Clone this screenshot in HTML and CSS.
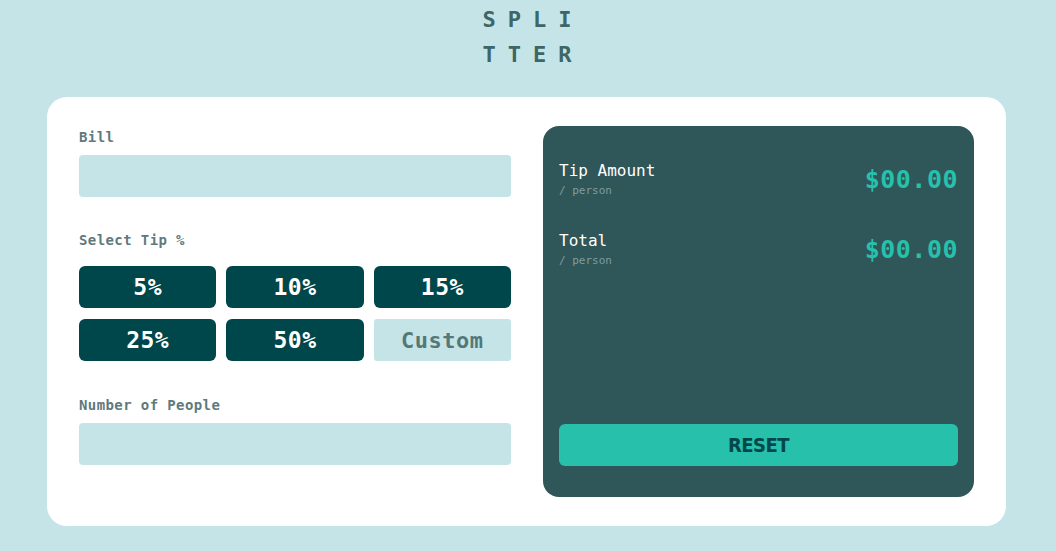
FILE: index.html
```html
<!DOCTYPE html>
<html lang="en">
<head>
<meta charset="utf-8">
<title>Splitter</title>
<link rel="stylesheet" href="styles.css">
</head>
<body>
<h1 class="logo">SPLITTER</h1>
<main class="card">
  <section class="inputs">
    <label class="label" for="bill">Bill</label>
    <input class="field" id="bill" type="text">
    <p class="label tip-label">Select Tip %</p>
    <div class="tips">
      <button class="tip">5%</button>
      <button class="tip">10%</button>
      <button class="tip">15%</button>
      <button class="tip">25%</button>
      <button class="tip">50%</button>
      <button class="tip custom">Custom</button>
    </div>
    <label class="label people-label" for="people">Number of People</label>
    <input class="field people" id="people" type="text">
  </section>
  <section class="result">
    <div class="row">
      <div class="row-text">
        <div class="row-title">Tip Amount</div>
        <div class="row-sub">/ person</div>
      </div>
      <div class="amount">$00.00</div>
    </div>
    <div class="row">
      <div class="row-text">
        <div class="row-title">Total</div>
        <div class="row-sub">/ person</div>
      </div>
      <div class="amount">$00.00</div>
    </div>
    <button class="reset">RESET</button>
  </section>
</main>
</body>
</html>
```

FILE: styles.css
```css
* { box-sizing: border-box; }

body {
  margin: 0;
  padding-right: 3px;
  background: #c5e4e7;
  font-family: "DejaVu Sans Mono", "Liberation Mono", monospace;
}

.logo {
  width: 114px;
  padding-left: 13px;
  margin: 2px auto 25px;
  font-size: 22px;
  line-height: 35px;
  letter-spacing: 12px;
  font-weight: bold;
  color: #3d6666;
  word-break: break-all;
}

.card {
  width: 959px;
  margin: 0 auto;
  background: #fff;
  border-radius: 20px;
  padding: 29px 32px;
  display: flex;
  gap: 32px;
}

.inputs {
  width: 432px;
  display: flex;
  flex-direction: column;
  padding-top: 1px;
  padding-bottom: 32px;
}

.label {
  display: block;
  margin: 0;
  font-size: 14px;
  line-height: 20px;
  font-weight: bold;
  letter-spacing: 0.4px;
  color: #5e7a7d;
}

.field {
  display: block;
  width: 100%;
  height: 42px;
  margin-top: 8px;
  border: none;
  border-radius: 4px;
  background: #c5e4e7;
}

.tip-label { margin-top: 33px; }

.tips {
  margin-top: 16px;
  display: grid;
  grid-template-columns: repeat(3, 1fr);
  column-gap: 10px;
  row-gap: 11px;
}

.tip {
  height: 42px;
  border: none;
  border-radius: 6px;
  background: #00474b;
  color: #fff;
  font-family: inherit;
  font-weight: bold;
  font-size: 23px;
  letter-spacing: 0.5px;
  padding: 0;
}

.tip.custom {
  background: #c5e4e7;
  color: #547878;
  border-radius: 3px;
  font-size: 22px;
}

.people-label { margin-top: 34px; }
.people { margin-top: 8px; }

.result {
  flex: 1;
  background: #2f5658;
  border-radius: 16px;
  padding: 35px 16px 31px;
  display: flex;
  flex-direction: column;
  gap: 30px;
}

.row {
  display: flex;
  align-items: center;
  justify-content: space-between;
}

.row-title {
  color: #fff;
  font-size: 16px;
  line-height: 20px;
}

.row-sub {
  color: #7f9c9f;
  font-size: 11px;
  line-height: 20px;
}

.amount {
  color: #26c0ab;
  font-size: 25px;
  font-weight: bold;
  letter-spacing: 0.5px;
  margin-bottom: 4px;
}

.reset {
  margin-top: auto;
  height: 42px;
  border: none;
  border-radius: 6px;
  background: #26c0ab;
  color: #00474b;
  font-family: "DejaVu Sans Condensed", "Roboto", sans-serif;
  font-weight: bold;
  font-size: 20px;
  letter-spacing: -0.5px;
}
```
